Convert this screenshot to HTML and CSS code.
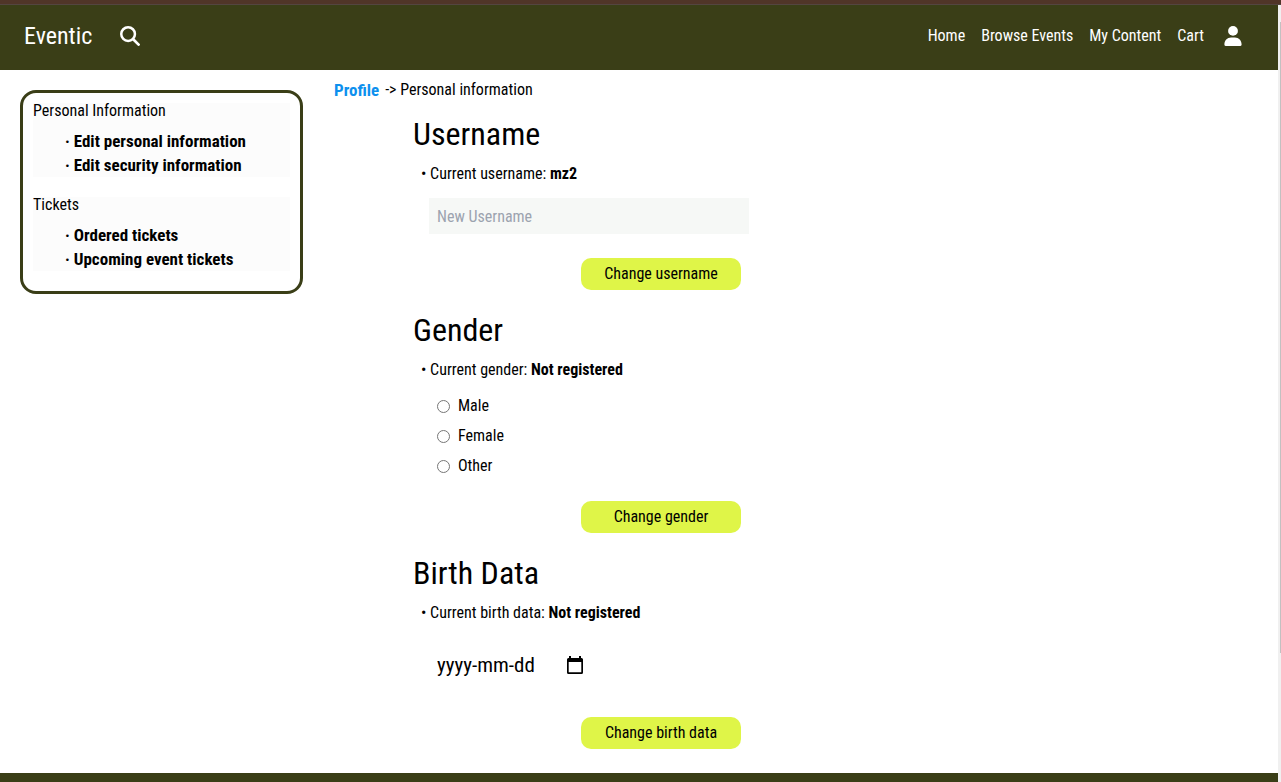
FILE: index.html
```html
<!DOCTYPE html>
<html lang="en">
<head>
<meta charset="utf-8">
<title>Eventic - Personal information</title>
<link rel="stylesheet" href="styles.css">
</head>
<body>
<div class="top-strip"></div>
<div class="viewport">
  <div class="page">
    <header class="header">
      <a class="brand" href="#">Eventic</a>
      <button class="icon-button" type="button" aria-label="Search">
        <svg width="20" height="20" viewBox="0 0 20 20" fill="none" stroke="#fff" stroke-width="2.5"><circle cx="8.1" cy="8.1" r="6.850"/><path d="M13.200 13.200l5.400 5.400" stroke-width="2.700" stroke-linecap="round"/></svg>
      </button>
      <nav class="nav">
        <a href="#">Home</a>
        <a href="#">Browse Events</a>
        <a href="#">My Content</a>
        <a href="#">Cart</a>
        <a class="account" href="#" aria-label="Account">
          <svg width="18" height="20" viewBox="0 0 18 20" fill="#fff"><circle cx="9" cy="4.900" r="4.900"/><path d="M.4 18.600c0-4 2.800-7 6.700-7h3.800c3.900 0 6.700 3 6.700 7 0 .8-.4 1.300-1.200 1.300H1.600c-.8 0-1.200-.5-1.200-1.300z"/></svg>
        </a>
      </nav>
    </header>
    <div class="content">
      <aside class="sidebar">
        <section class="group">
          <h2 class="group-title">Personal Information</h2>
          <ul class="group-list">
            <li><a href="#">Edit personal information</a></li>
            <li><a href="#">Edit security information</a></li>
          </ul>
        </section>
        <section class="group">
          <h2 class="group-title">Tickets</h2>
          <ul class="group-list">
            <li><a href="#">Ordered tickets</a></li>
            <li><a href="#">Upcoming event tickets</a></li>
          </ul>
        </section>
      </aside>
      <main class="main">
        <p class="breadcrumb"><a href="#">Profile</a><span>-&gt; Personal information</span></p>
        <div class="forms">
          <form class="section">
            <h1 class="heading">Username</h1>
            <p class="current">• Current username: <b>mz2</b></p>
            <input class="text-input" type="text" placeholder="New Username" aria-label="New Username">
            <button class="submit" type="button">Change username</button>
          </form>
          <form class="section">
            <h1 class="heading">Gender</h1>
            <p class="current">• Current gender: <b>Not registered</b></p>
            <div class="options">
              <label class="option"><input type="radio" name="gender">Male</label>
              <label class="option"><input type="radio" name="gender">Female</label>
              <label class="option"><input type="radio" name="gender">Other</label>
            </div>
            <button class="submit" type="button">Change gender</button>
          </form>
          <form class="section">
            <h1 class="heading">Birth Data</h1>
            <p class="current">• Current birth data: <b>Not registered</b></p>
            <div class="date-field">
              <input class="date-input" type="text" placeholder="yyyy-mm-dd" aria-label="Birth date">
              <button class="icon-button" type="button" aria-label="Open calendar">
                <svg width="16" height="18" viewBox="0 0 16 18"><path fill="#000" fill-rule="evenodd" d="M2 0h2v2h8V0h2v2h.5A1.500 1.500 0 0 1 16 3.500v13a1.500 1.500 0 0 1-1.500 1.500h-13A1.500 1.500 0 0 1 0 16.500v-13A1.500 1.500 0 0 1 1.500 2H2zM1.700 6v10.300h12.600V6z"/></svg>
              </button>
            </div>
            <button class="submit" type="button">Change birth data</button>
          </form>
        </div>
      </main>
    </div>
    <footer class="footer"></footer>
  </div>
  <div class="scrollbar"><div class="thumb"></div></div>
</div>
</body>
</html>
```
FILE: styles.css
```css
* { box-sizing: border-box; }

body {
  margin: 0;
  min-height: 100vh;
  display: flex;
  flex-direction: column;
  background: #fff;
  color: #000;
  font-family: "Roboto Condensed", "Liberation Sans Narrow", Roboto, sans-serif;
  font-size: 16px;
  line-height: 24px;
}

h1, h2, p, ul { margin: 0; padding: 0; font-weight: 400; }
a { color: inherit; text-decoration: none; }
button, input { font: inherit; color: inherit; }
svg { display: block; }

.top-strip {
  height: 5px;
  background: #503528;
  border-bottom: 1px solid #534540;
}

.viewport { flex: 1; display: flex; }
.page { flex: 1; display: flex; flex-direction: column; }

.scrollbar { width: 3px; padding: 17px 0 0 2px; background: #f0f0f0; }
.thumb { height: 83%; background: #c1c1c1; }

.header {
  height: 65px;
  padding: 0 36px 3px 24px;
  display: flex;
  align-items: center;
  background: #3a3e17;
  color: #fff;
}

.brand { font-size: 24px; line-height: 32px; margin-right: 28px; }
.icon-button { padding: 0; border: 0; background: none; }
.nav { margin-left: auto; display: flex; align-items: center; gap: 16px; }
.account { margin-left: 4px; }

.content { flex: 1; display: flex; align-items: flex-start; }

.sidebar {
  width: 283px;
  margin: 20px 0 0 20px;
  padding: 10px 10px 20px;
  display: flex;
  flex-direction: column;
  gap: 20px;
  border: 3px solid #3a3e17;
  border-radius: 16px;
}

.group { background: #fcfcfc; }
.group-title { font-size: 16px; line-height: 16px; margin-bottom: 10px; }
.group-list { padding-left: 32px; list-style: none; font-size: 17px; font-weight: 700; }
.group-list li::before { content: "· "; }

.main { flex: 1; padding: 8px 0 24px 31px; }
.breadcrumb { display: flex; gap: 6px; }
.breadcrumb a { color: #0d90ee; font-size: 17px; font-weight: 700; }
.forms { width: 336px; margin: 12px 0 0 79px; display: flex; flex-direction: column; gap: 20px; }

.section { display: flex; flex-direction: column; }
.heading { font-size: 32px; line-height: 40px; margin-bottom: 8px; }
.current { padding-left: 8px; }

.text-input {
  height: 36px;
  margin: 12px 0 24px 16px;
  padding: 0 8px;
  border: 0;
  background: #f6f8f6;
}
.text-input::placeholder { color: #9ca3af; opacity: 1; }

.options { margin: 9px 0 20px 24px; }
.option { height: 30px; display: flex; align-items: center; gap: 8px; }
.option input { width: 13px; height: 13px; margin: 0; }

.date-field { height: 40px; margin: 20px 0 32px 24px; display: flex; align-items: center; }
.date-input { width: 130px; padding: 0; border: 0; background: none; font-size: 21px; }
.date-input::placeholder { color: #000; opacity: 1; }

.submit {
  align-self: flex-end;
  width: 160px;
  height: 32px;
  margin-right: 8px;
  padding: 0;
  border: 0;
  border-radius: 10px;
  background: #dff548;
}

.footer { height: 9px; background: #3a3e17; }
```
